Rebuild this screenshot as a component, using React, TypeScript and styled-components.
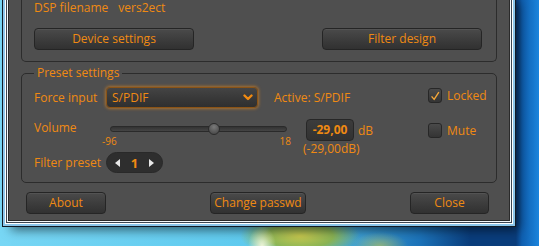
import React from "react";
import styled, { createGlobalStyle } from "styled-components";

const ORANGE = "#f08a12";

const GlobalStyle = createGlobalStyle`
  html, body {
    margin: 0;
    padding: 0;
    overflow: hidden;
  }
  body {
    font-family: "Open Sans", "Noto Sans", sans-serif;
  }
`;

export default function App() {
    return (
        <Desktop>
            <GlobalStyle />
            <Panel>
                <TopGroup>
                    <FileRow>
                        <span>DSP filename</span>
                        <span>vers2ect</span>
                    </FileRow>
                    <ButtonRow>
                        <Button $width={160}>Device settings</Button>
                        <Button $width={160}>Filter design</Button>
                    </ButtonRow>
                </TopGroup>

                <PresetGroup>
                    <Legend>Preset settings</Legend>
                    <InputRow>
                        <Label>Force input</Label>
                        <SelectBox>
                            <span>S/PDIF</span>
                            <svg width="10" height="7" viewBox="0 0 10 7">
                                <path d="M1.5 1.5 L5 5 L8.5 1.5" fill="none" stroke={ORANGE} strokeWidth="2.4" strokeLinecap="round" strokeLinejoin="round" />
                            </svg>
                        </SelectBox>
                        <Active>Active: S/PDIF</Active>
                        <CheckLabel $offset={1}>
                            <CheckBox>
                                <svg width="14" height="14" viewBox="0 0 14 14">
                                    <path d="M3 7.5 L6 11 L11.5 2.5" fill="none" stroke="#f5a83a" strokeWidth="1.6" strokeLinejoin="round" />
                                </svg>
                            </CheckBox>
                            Locked
                        </CheckLabel>
                    </InputRow>

                    <VolumeRow>
                        <Label>Volume</Label>
                        <SliderBlock>
                            <Track>
                                <Thumb style={{ left: `${(-29 + 96) / 114 * 100}%` }} />
                            </Track>
                            <Scale>
                                <span>-96</span>
                                <span>18</span>
                            </Scale>
                        </SliderBlock>
                        <ValueBlock>
                            <ValueLine>
                                <ValueBox>-29,00</ValueBox>
                                <span>dB</span>
                            </ValueLine>
                            <Caption>(-29,00dB)</Caption>
                        </ValueBlock>
                        <CheckLabel $offset={4}>
                            <CheckBox />
                            Mute
                        </CheckLabel>
                    </VolumeRow>

                    <PresetRow>
                        <Label>Filter preset</Label>
                        <Stepper>
                            <Arrow $dir="left" />
                            <StepValue>1</StepValue>
                            <Arrow $dir="right" />
                        </Stepper>
                    </PresetRow>
                </PresetGroup>

                <FooterRow>
                    <Button $width={80}>About</Button>
                    <Button $width={96}>Change passwd</Button>
                    <Button $width={79}>Close</Button>
                </FooterRow>
            </Panel>
        </Desktop>
    );
}

const Desktop = styled.div`
  position: relative;
  width: 539px;
  height: 246px;
  overflow: hidden;
  background:
    radial-gradient(ellipse 14px 20px at 262px 246px, rgba(250, 250, 220, 0.9) 0, rgba(230, 230, 120, 0) 100%),
    radial-gradient(ellipse 60px 22px at 300px 236px, rgba(205, 200, 70, 0.95) 0, rgba(150, 180, 60, 0.85) 55%, rgba(110, 190, 150, 0) 100%),
    radial-gradient(ellipse 28px 14px at 380px 246px, rgba(200, 200, 80, 0.6) 0, rgba(200, 200, 80, 0) 100%),
    linear-gradient(to right, rgba(120, 215, 245, 1) 0, rgba(90, 200, 238, 1) 300px, rgba(40, 150, 225, 0.6) 420px, rgba(30, 120, 210, 0) 470px),
    linear-gradient(to right, #0a3d7c 516px, #0f5fb0 522px, #1b84dc 539px);
`;

const Panel = styled.div`
  display: flex;
  flex-direction: column;
  margin-left: 9px;
  width: 500px;
  height: 220px;
  box-sizing: border-box;
  background: #4f4f4f;
  color: ${ORANGE};
  font-size: 12px;
  box-shadow:
    0 0 0 1px #2a2a2a,
    0 0 0 2px #f4f8fb,
    0 0 0 3px #3a4450,
    0 0 0 4px #ffffff,
    0 0 0 6px #8cc6ea,
    0 0 0 7px #121a24,
    6px 6px 10px 4px rgba(0, 0, 0, 0.55);
`;

const TopGroup = styled.div`
  margin: 0 12px;
  padding: 1px 14px 11px 12px;
  border: 1px solid #2c2c2c;
  border-top: none;
  border-radius: 0 0 5px 5px;
`;

const FileRow = styled.div`
  display: flex;
  gap: 10px;
  height: 14px;
  line-height: 14px;
`;

const ButtonRow = styled.div`
  display: flex;
  justify-content: space-between;
  margin-top: 13px;
`;

const Button = styled.button<{ $width: number }>`
  width: ${(p) => p.$width}px;
  height: 22px;
  padding: 0;
  box-sizing: border-box;
  border: 1px solid #252525;
  border-radius: 4px;
  background: linear-gradient(to bottom, #4a4a4a 0%, #3d3d3d 50%, #313131 100%);
  box-shadow: inset 0 1px 0 rgba(255, 255, 255, 0.06);
  color: ${ORANGE};
  font-family: inherit;
  font-size: 12px;
  line-height: 20px;
`;

const PresetGroup = styled.fieldset`
  margin: 4px 12px 0;
  padding: 0 0 9px 12px;
  border: 1px solid #2c2c2c;
  border-radius: 5px;
  min-width: 0;
`;

const Legend = styled.legend`
  padding: 0 3px;
  font-size: 12px;
  line-height: 14px;
`;

const Label = styled.div`
  line-height: 18px;
`;

const InputRow = styled.div`
  display: grid;
  grid-template-columns: 72px 152px 1fr 68px;
  align-items: center;
  margin-top: 7px;
  height: 21px;
`;

const SelectBox = styled.div`
  display: flex;
  align-items: center;
  justify-content: space-between;
  height: 21px;
  box-sizing: border-box;
  padding: 0 4px 0 5px;
  border: 1px solid #8a5316;
  border-radius: 4px;
  background: linear-gradient(to bottom, #444 0%, #383838 55%, #2f2f2f 100%);
  box-shadow: 0 0 3px 1px rgba(239, 138, 23, 0.55);
  font-size: 12px;
`;

const Active = styled.div`
  padding-left: 16px;
`;

const CheckLabel = styled.label<{ $offset?: number }>`
  display: flex;
  align-items: center;
  gap: 5px;
  align-self: start;
  margin-top: ${(p) => p.$offset ?? 0}px;
  line-height: 15px;
  font-size: 12px;
`;

const CheckBox = styled.span`
  display: inline-flex;
  width: 14px;
  height: 15px;
  box-sizing: border-box;
  border: 1px solid #272727;
  border-radius: 3px;
  background: linear-gradient(to bottom, #4a4a4a, #343434);
`;

const VolumeRow = styled.div`
  display: grid;
  grid-template-columns: 72px 185px 1fr 68px;
  align-items: start;
  margin-top: 11px;
  height: 31px;
`;

const SliderBlock = styled.div`
  padding: 5px 0 0 4px;
`;

const Track = styled.div`
  position: relative;
  width: 177px;
  height: 6px;
  margin-top: 2px;
  box-sizing: border-box;
  border: 1px solid #2a2a2a;
  border-radius: 3px;
  background: linear-gradient(to bottom, #333, #454545);
`;

const Thumb = styled.span`
  position: absolute;
  top: 50%;
  width: 12px;
  height: 12px;
  box-sizing: border-box;
  border: 1px solid #2b2b2b;
  border-radius: 50%;
  transform: translate(-50%, -50%);
  background: radial-gradient(circle at 50% 30%, #7a7a7a, #4e4e4e 75%);
`;

const Scale = styled.div`
  display: flex;
  justify-content: space-between;
  width: 189px;
  margin: 3px 0 0 -8px;
  font-size: 10px;
  line-height: 13px;
`;

const ValueBlock = styled.div`
  display: flex;
  flex-direction: column;
  padding-left: 15px;
`;

const ValueLine = styled.div`
  display: flex;
  align-items: center;
  gap: 4px;
  font-size: 12px;
`;

const ValueBox = styled.div`
  width: 48px;
  height: 22px;
  box-sizing: border-box;
  border: 1px solid #272727;
  border-radius: 4px;
  background: linear-gradient(to bottom, #3c3c3c, #323232);
  text-align: center;
  line-height: 20px;
  font-weight: bold;
  font-size: 12px;
`;

const Caption = styled.div`
  margin: 1px 0 0 -3px;
  line-height: 14px;
`;

const PresetRow = styled.div`
  display: grid;
  grid-template-columns: 72px auto;
  justify-content: start;
  align-items: center;
  margin-top: 2px;
  height: 21px;
`;

const Stepper = styled.div`
  display: flex;
  align-items: center;
  justify-content: space-between;
  width: 57px;
  height: 21px;
  box-sizing: border-box;
  padding: 0 8px;
  border-radius: 11px;
  background: #2e2e2e;
  border: 1px solid #292929;
`;

const Arrow = styled.span<{ $dir: "left" | "right" }>`
  width: 0;
  height: 0;
  border-top: 4px solid transparent;
  border-bottom: 4px solid transparent;
  ${(p) => (p.$dir === "left" ? "border-right: 5px solid #e8e8e8;" : "border-left: 5px solid #e8e8e8;")}
`;

const StepValue = styled.span`
  font-size: 13px;
  font-weight: bold;
`;

const FooterRow = styled.div`
  display: flex;
  justify-content: space-between;
  margin-top: 9px;
  padding: 0 20px 0 17px;
`;
